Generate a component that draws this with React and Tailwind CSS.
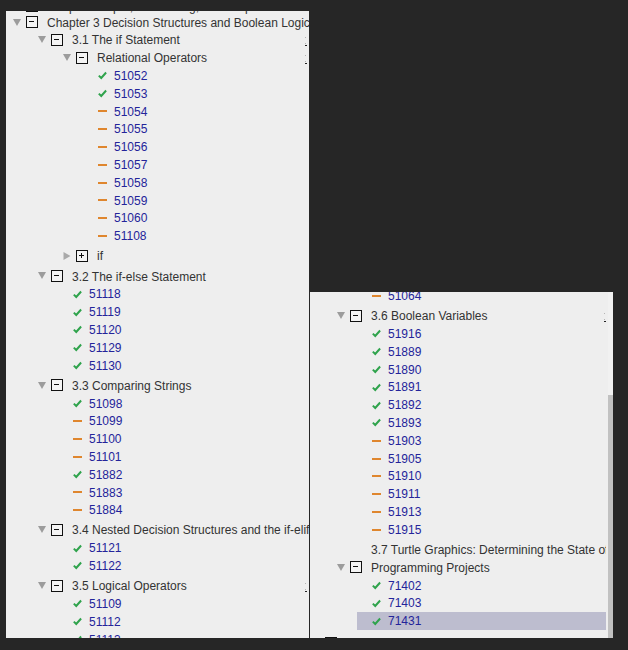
import React from 'react';

// tree rows: 17.8px tall, each nested list ends with a 2.4px gap
const Caret = ({ open }) =>
  open ? (
    <svg width="8" height="7" viewBox="0 0 8 7" className="shrink-0">
      <path d="M0 0H8L4 7Z" fill="#9c9c9c" />
    </svg>
  ) : (
    <svg width="8" height="8" viewBox="0 0 8 8" className="shrink-0">
      <path d="M0.5 0L7.5 4L0.5 8Z" fill="#a9a9a9" />
    </svg>
  );

const Toggle = ({ open }) => (
  <svg width="12" height="12" viewBox="0 0 12 12" className="shrink-0">
    <rect x="0.5" y="0.5" width="11" height="11" fill="#f4f4f4" stroke="#111" />
    <rect x="3" y="5" width="5" height="1" fill="#111" />
    {!open && <rect x="5" y="3" width="1" height="5" fill="#111" />}
  </svg>
);

const Check = () => (
  <svg width="10" height="9" viewBox="0 0 10 9">
    <path d="M0.9 4.6L3.6 7.3L9 1.2" fill="none" stroke="#2fa34c" strokeWidth="2.2" />
  </svg>
);

const Dash = () => <span className="block h-[2px] w-[9px] bg-[#df862e]" />;

const Mark = ({ right }) => (
  <span className={`flex w-[2px] shrink-0 flex-col self-stretch pt-[6px] ${right}`}>
    <i className="block h-px w-px bg-[#b5b5b5]" />
    <i className="mt-[5px] block h-px w-px bg-[#b5b5b5]" />
    <i className="mt-px block h-px w-[2px] bg-[#222]" />
  </span>
);

function Head({ text, pl, open = true, toggle = true, mark, markRight = 'mr-[2px]' }) {
  return (
    <div className={`flex h-[17.8px] items-center ${pl}`}>
      <span className="flex w-[8px] shrink-0 justify-center">{toggle && <Caret open={open} />}</span>
      <span className="ml-[5px] flex w-[12px] shrink-0">{toggle && <Toggle open={open} />}</span>
      <span className="ml-[9px] min-w-0 flex-1 overflow-hidden whitespace-nowrap pt-[3px] text-[#333]">{text}</span>
      {mark && <Mark right={markRight} />}
    </div>
  );
}

function Leaf({ id, ok, ml, selected }) {
  return (
    <div className={`flex h-[17.8px] items-center pl-[15px] ${ml} ${selected ? 'bg-[#bdbdcf]' : ''}`}>
      <span className="flex w-[9px] shrink-0 justify-center pt-px">{ok ? <Check /> : <Dash />}</span>
      <span className="ml-[7px] whitespace-nowrap pt-[3px] text-[#24249a]">{id}</span>
    </div>
  );
}

const List = ({ children }) => <div className="pb-[2.4px]">{children}</div>;

const leaves = (items, ml) =>
  items.map(([id, ok]) => <Leaf key={id} id={id} ok={ok} ml={ml} />);

export default function App() {
  return (
    <div className="flex h-[650px] w-[628px] items-start overflow-hidden bg-[#262626] font-['Liberation_Sans',Arial,sans-serif] text-[12px] leading-[17.8px]">
      {/* left tree */}
      <div className="ml-[6px] mt-[11px] h-[627px] w-[303px] shrink-0 overflow-hidden bg-[#eeeeee]">
        <div className="-mt-[13.9px] h-[16px]">
          <Head text="Chapter 2 Input, Processing, and Output" pl="pl-[7px]" open={false} />
        </div>
        <Head text="Chapter 3 Decision Structures and Boolean Logic" pl="pl-[7px]" />
        <List>
          <Head text="3.1 The if Statement" pl="pl-[32px]" mark />
          <List>
            <Head text="Relational Operators" pl="pl-[57px]" mark />
            <List>
              {leaves(
                [
                  ['51052', true],
                  ['51053', true],
                  ['51054'],
                  ['51055'],
                  ['51056'],
                  ['51057'],
                  ['51058'],
                  ['51059'],
                  ['51060'],
                  ['51108'],
                ],
                'ml-[77px]'
              )}
            </List>
            <Head text="if" pl="pl-[57px]" open={false} />
          </List>
          <Head text="3.2 The if-else Statement" pl="pl-[32px]" />
          <List>
            {leaves(
              [
                ['51118', true],
                ['51119', true],
                ['51120', true],
                ['51129', true],
                ['51130', true],
              ],
              'ml-[52px]'
            )}
          </List>
          <Head text="3.3 Comparing Strings" pl="pl-[32px]" />
          <List>
            {leaves(
              [
                ['51098', true],
                ['51099'],
                ['51100'],
                ['51101'],
                ['51882', true],
                ['51883'],
                ['51884'],
              ],
              'ml-[52px]'
            )}
          </List>
          <Head text="3.4 Nested Decision Structures and the if-elif-else Statement" pl="pl-[32px]" />
          <List>
            {leaves(
              [
                ['51121', true],
                ['51122', true],
              ],
              'ml-[52px]'
            )}
          </List>
          <Head text="3.5 Logical Operators" pl="pl-[32px]" mark />
          <List>
            {leaves(
              [
                ['51109', true],
                ['51112', true],
                ['51113', true],
              ],
              'ml-[52px]'
            )}
          </List>
        </List>
      </div>

      {/* right tree, scrolled further down */}
      <div className="ml-[1px] mt-[292px] flex h-[346px] w-[303px] shrink-0 bg-[#eeeeee]">
        <div className="h-full w-[296px] overflow-hidden">
          <div className="-mt-[5.4px] pb-[2.4px]">
            <Leaf id="51064" ml="ml-[47px]" />
          </div>
          <Head text="3.6 Boolean Variables" pl="pl-[27px]" mark markRight="mr-0" />
          <List>
            {leaves(
              [
                ['51916', true],
                ['51889', true],
                ['51890', true],
                ['51891', true],
                ['51892', true],
                ['51893', true],
                ['51903'],
                ['51905'],
                ['51910'],
                ['51911'],
                ['51913'],
                ['51915'],
              ],
              'ml-[47px]'
            )}
          </List>
          <Head text="3.7 Turtle Graphics: Determining the State of the Turtle" pl="pl-[27px]" toggle={false} />
          <Head text="Programming Projects" pl="pl-[27px]" />
          <List>
            <List>
              <Leaf id="71402" ok ml="ml-[47px]" />
              <Leaf id="71403" ok ml="ml-[47px]" />
              <Leaf id="71431" ok ml="ml-[47px]" selected />
            </List>
          </List>
          <Head text="Chapter 4 Repetition Structures" pl="pl-[2px]" open={false} />
        </div>
        <div className="ml-[2px] flex w-[5px] flex-col bg-[#f1f1f1]">
          <div className="h-[103px]" />
          <div className="flex-1 bg-[#c1c1c1]" />
        </div>
      </div>
    </div>
  );
}
